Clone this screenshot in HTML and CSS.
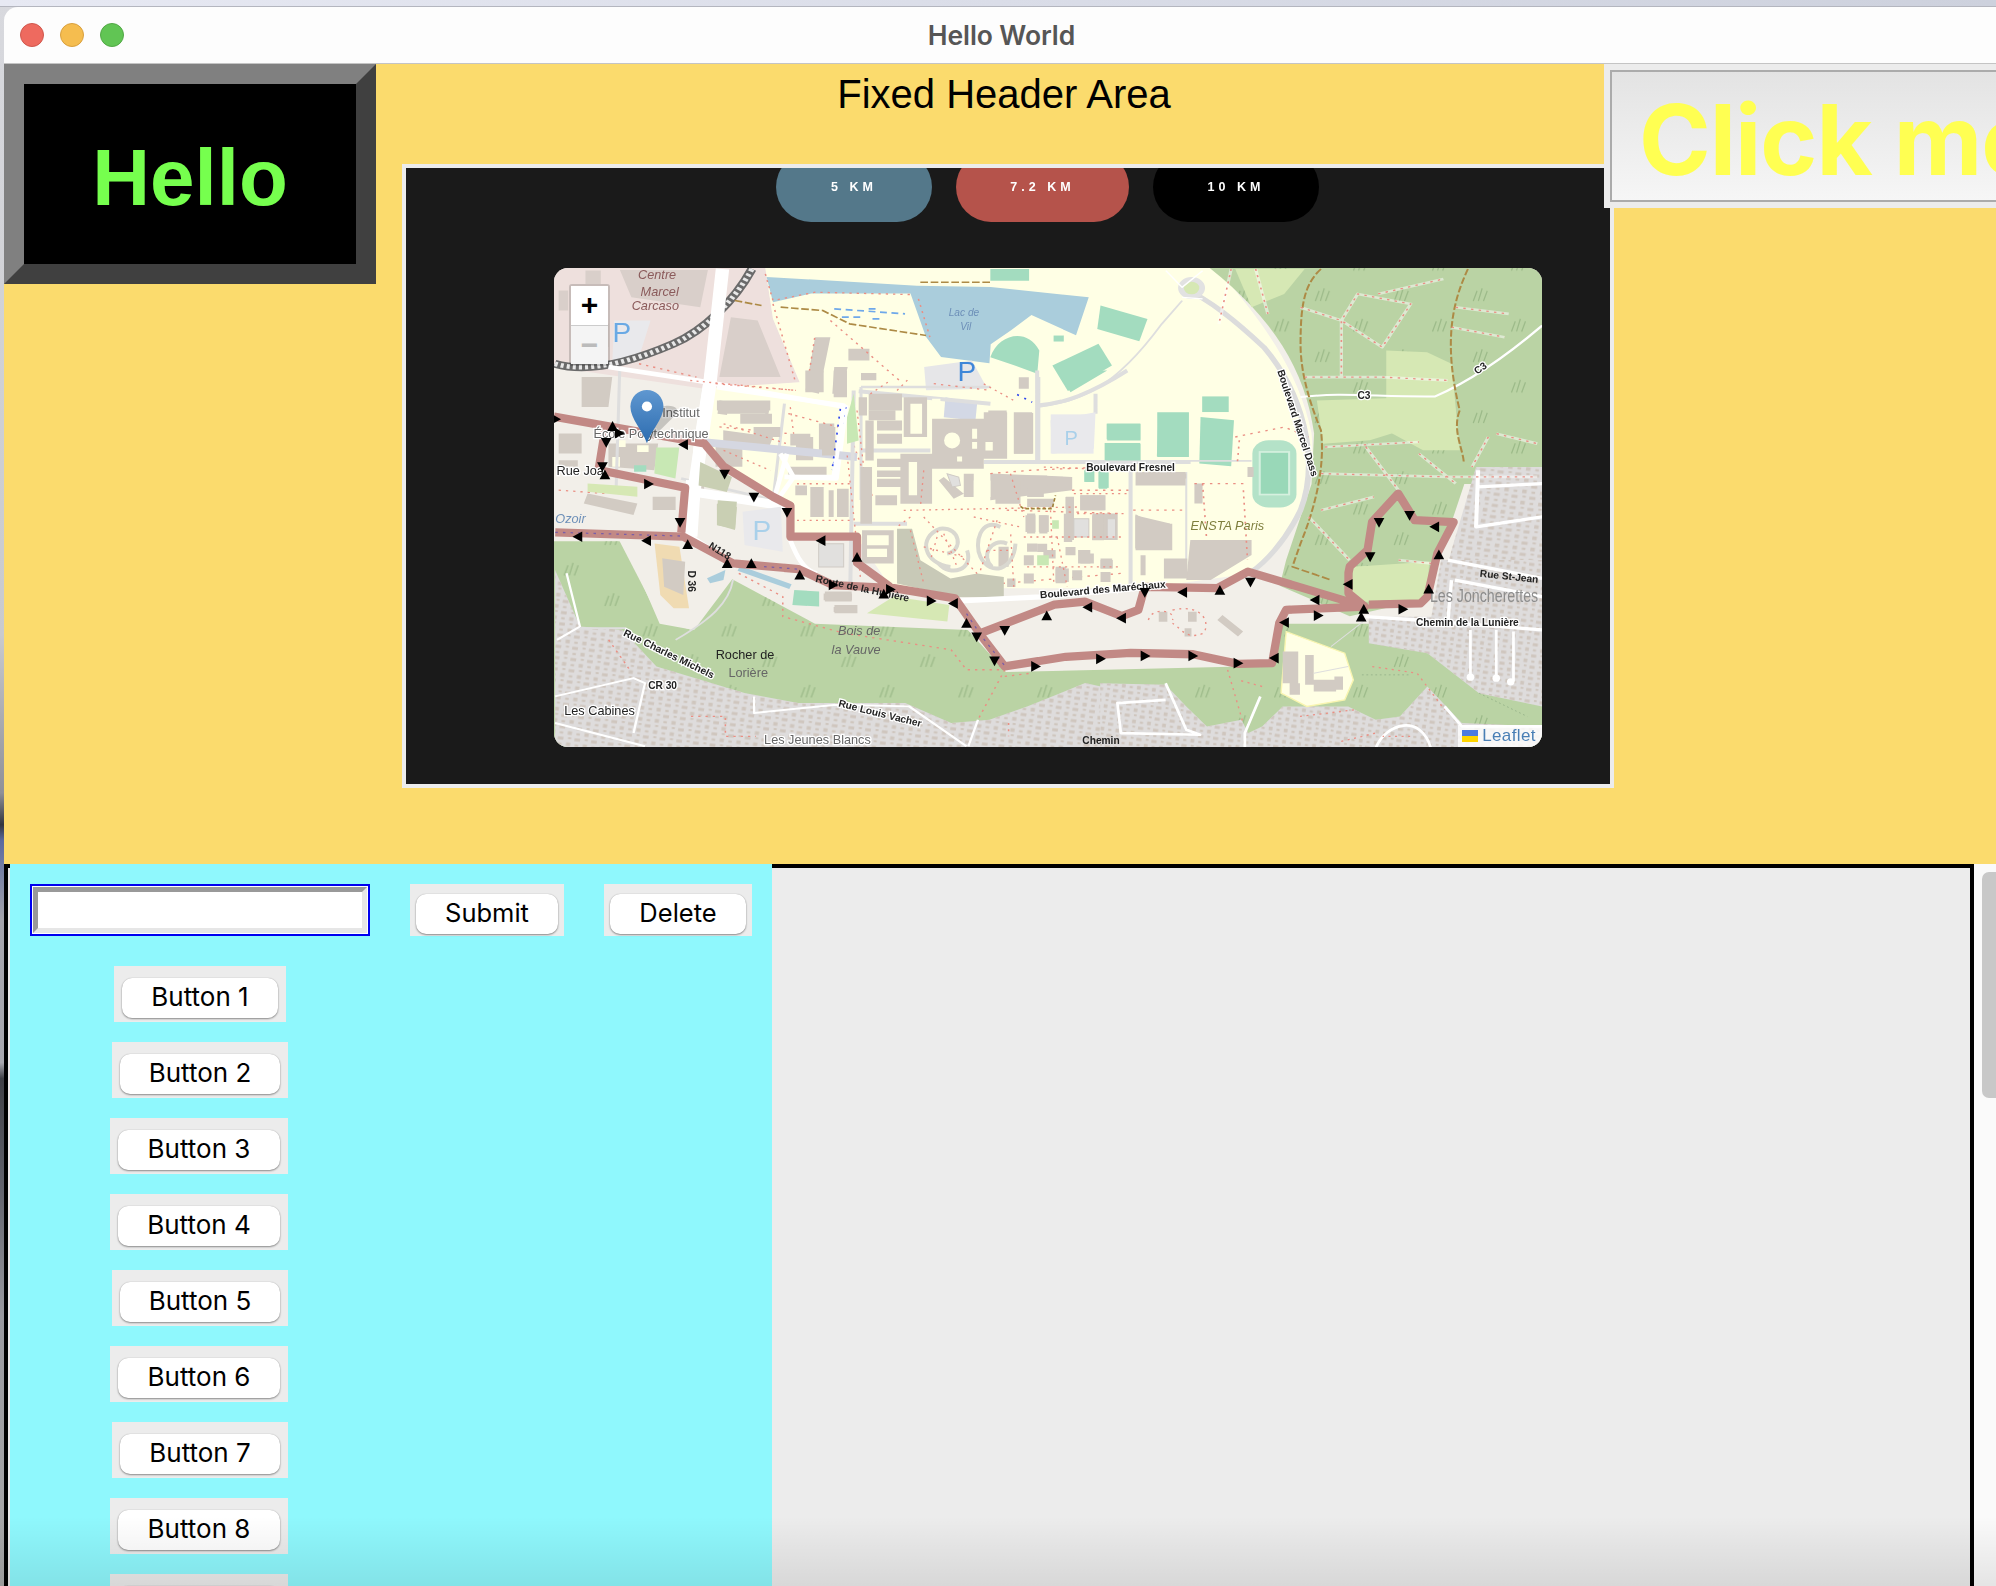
FILE: index.html
```html
<!DOCTYPE html>
<html lang="en">
<head>
<meta charset="utf-8">
<title>Hello World</title>
<link rel="stylesheet" href="styles.css">
</head>
<body>
<div class="desk-strip"></div>
<div class="window">
  <div class="titlebar">
    <div class="lights"><span class="light red"></span><span class="light amber"></span><span class="light green"></span></div>
    <div class="title">Hello World</div>
  </div>
  <header class="top">
    <div class="hello"><span>Hello</span></div>
    <div class="main">
      <h1 class="heading">Fixed Header Area</h1>
      <div class="frame">
        <div class="pills">
          <span class="pill pill-blue">5 KM</span>
          <span class="pill pill-red">7.2 KM</span>
          <span class="pill pill-black">10 KM</span>
        </div>
        <div class="map">
          <svg class="map-svg" viewBox="435 210 776 377" preserveAspectRatio="none" xmlns="http://www.w3.org/2000/svg">
            <defs>
              <pattern id="trees" width="62" height="48" patternUnits="userSpaceOnUse">
                <path class="tree" d="M12 12l-3 8M16 10l-3 10M20 12l-3 8M44 36l-3 8M48 34l-3 10M52 36l-3 8"/>
              </pattern>
              <pattern id="houses" width="44" height="34" patternUnits="userSpaceOnUse" patternTransform="rotate(8)">
                <rect class="house" x="3" y="4" width="15" height="9"/><rect class="house" x="27" y="19" width="11" height="11"/><rect class="house" x="30" y="3" width="8" height="6"/><rect class="house" x="6" y="22" width="9" height="7"/>
              </pattern>
              <linearGradient id="pin" x1="0" y1="0" x2="0" y2="1"><stop offset="0" stop-color="#5f97d0"/><stop offset="1" stop-color="#2c6cb0"/></linearGradient>
              <path id="au" d="M0-4.5 4.2 3.2H-4.2Z"/>
              <path id="ad" d="M0 4.5 4.2-3.2H-4.2Z"/>
              <path id="al" d="M-4.5 0 3.2-4.2V4.2Z"/>
              <path id="ar" d="M4.5 0-3.2-4.2V4.2Z"/>
            </defs>

            <!-- land use -->
            <rect class="land" x="435" y="210" width="776" height="377"/>
            <path class="pinkzone" d="M435 210H601L607 250 628 300 560 306 435 288Z"/>
            <path class="campus" d="M601 210H955C990 250 1020 290 1030 340 1035 390 1010 430 985 450L898 462 700 462 675 425 620 420 618 395 570 370 548 345 562 304 628 300 607 250Z"/>
            <path class="lake" d="M602 217 720 224 778 225 855 233 845 263 810 247 794 259 778 270 777 285 739 280 727 264 715 230 637 230 607 237Z"/>
            <path class="forest" d="M950 210H1211V380H1150L1130 440 1122 470 1060 484 1005 460 1010 440 1030 380 1032 340C1025 290 1000 250 950 210Z"/>
            <path class="trees" d="M950 210H1211V380H1150L1130 440 1122 470 1060 484 1005 460 1010 440 1030 380 1032 340C1025 290 1000 250 950 210Z"/>
            <path class="forest" d="M435 425H490L518 490 545 495 575 455 640 490 760 495 790 528 1000 523 1007 490 1060 490 1211 490V587H435Z"/>
            <path class="trees" d="M435 425H490L518 490 545 495 575 455 640 490 760 495 790 528 1000 523 1007 490 1060 490 1211 490V587H435Z"/>

            <!-- east forest, campus edge -->
            <g transform="translate(777.7 196.4) scale(.3206 .2618)">
              <path class="meadow" d="M800 450 1060 440 1060 520 930 570 815 580Z"/>
              <path class="meadow" d="M970 300 1070 305 1130 340 1150 600 1060 600 970 540Z"/>
              <path class="meadow" d="M600 55H770L720 130 640 170Z"/>
              <path class="meadow" d="M890 950 1075 935 1070 1050 880 1050Z"/>
              <path class="residential" d="M1190 650H1352V1050H1100L1130 900Z"/>
              <path class="houses" d="M1190 650H1352V1050H1100L1130 900Z"/>
              <path class="whiteroad w10" d="M1195 660 1190 830 1352 800M1195 710 1352 700M1110 940 1352 1000"/>
              <path class="sport" d="M270 165 385 205 365 272 262 235Z"/>
              <path class="sport" d="M152 345 265 280 298 345 190 422Z"/>
              <path class="sport" d="M0 320C20 250 90 230 120 300L115 370 60 345Z"/>
              <path class="sport" d="M0 55H95V90H0Z"/>
              <path class="sport" d="M155 255h25v18h-25Z"/>
              <rect class="sport" x="519" y="438" width="65" height="47"/>
              <path class="sport" d="M412 488 485 488 478 618 408 618Z"/>
              <path class="sport" d="M515 500 597 510 590 648 512 640Z"/>
              <rect class="sport" x="285" y="520" width="82" height="47"/>
              <rect class="sport" x="280" y="578" width="87" height="52"/>
              <rect class="sport" x="230" y="660" width="25" height="35"/>
              <rect class="sport" x="265" y="665" width="25" height="48"/>
              <rect class="sportlight" x="642" y="570" width="108" height="202" rx="40"/>
              <rect class="sport dark" x="660" y="605" width="72" height="128"/>
              <path class="grayroad w5" d="M0 632 H640M120 380V630M345 665V1000M480 665V950M120 470C220 450 300 420 420 220L470 150"/>
              <path class="edge" d="M470 110C540 150 600 210 670 290 760 420 810 620 760 780 720 880 670 940 640 965"/>
              <circle class="meadowc" cx="493" cy="112" r="26"/>
              <path class="whiteroad w6" d="M760 440C860 425 950 440 1090 438 1180 390 1280 300 1352 225"/>
              <path class="whiteroad w4" d="M430 60 470 110 520 60M520 145 470 140"/>
              <rect class="parking" x="148" y="492" width="105" height="118"/>
              <text class="p-big pale" x="182" y="580">P</text>
              <path class="bld" d="M355 795 440 820V895H355ZM490 870H640V915L540 990H480ZM-5 480H40V620H-5ZM58 488H105V610H58ZM220 735H280V780H220ZM185 740H205V870H185ZM250 790H312V870H250ZM90 790H110V850H90ZM120 795H140V850H120ZM0 670 200 680V720L0 750ZM90 880h25v25H90ZM130 900h30v25h-30ZM270 930h30v25h-30ZM215 900h30v40h-30ZM20 890h25v60H20ZM160 950h25v50h-25ZM370 670h110v15H370ZM500 700h20v60h-20ZM630 650h15v30h-15Z"/>
              <path class="foot-base" d="M590 55 560 220M650 55 680 190M760 170 860 210 960 290 1030 160 900 130 860 210 860 380M950 130 1110 85M770 380H960L1120 390M1130 230 1260 260M1140 170 1270 190M820 590 1050 575M810 670 1120 680 1340 680M920 590 1000 720M1050 610 1140 700M1220 560 1180 650M1240 550 1340 580M810 780 940 740M780 800 880 930M1000 930 1080 940"/>
              <path class="brown" d="M810 55C770 100 760 160 760 280 760 340 770 420 810 540 820 640 800 760 760 880L740 950 835 990M1170 55C1130 160 1110 280 1150 480 1130 540 1160 600 1160 640 1140 760 1130 780M1145 130H1280L1345 55M1275 135C1240 300 1260 400 1230 520M1060 450V590L985 640 1000 720M790 800 900 880 880 980M1340 260C1320 420 1320 500 1305 580M0 100 130 105 270 145 420 225"/>
              <path class="foot" d="M590 55 560 220M650 55 680 190M760 170 860 210 960 290 1030 160 900 130 860 210 860 380M950 130 1110 85M770 380H960L1120 390M1130 230 1260 260M1140 170 1270 190M820 590 1050 575M810 670 1120 680 1340 680M920 590 1000 720M1050 610 1140 700M1220 560 1180 650M1240 550 1340 580M810 780 940 740M780 800 880 930M1000 930 1080 940"/>
              <path class="foot" d="M600 560 720 530 780 560M610 570 605 640M0 670 100 660 280 650M200 720H340M350 780H480M500 700H620M620 720 630 930M520 700 530 870M40 780 320 790M30 1000 320 970"/>
            </g>

            <!-- west campus / top-left -->
            <g transform="translate(306.4 117.8) scale(.3006 .2618)">
              <path class="bld pinkbld" d="M600 358H830L810 470 630 440ZM890 500 960 510 1020 680 860 680ZM440 420h25v60h-25ZM510 360h40v40h-40ZM510 520h60v70h-60Z"/>
              <path class="parking" d="M585 510H680L650 620 580 640Z"/>
              <path class="sand" d="M1395 650 1520 630 1560 715 1400 720Z"/>
              <path class="bld" d="M1110 560H1150L1120 730 1085 720ZM1197 595h55v35h-55ZM1160 650h35l-15 80h-25ZM1230 668h40v22h-40ZM500 680h80l-10 90h-70ZM860 750 990 780 985 810 855 790ZM570 880H700L690 960 570 950ZM870 840 1000 860 990 890 870 880ZM1450 890h60v60h-60ZM440 850h60v60h-60ZM850 890h70v60h-70ZM1060 860h45v70h-45ZM1120 820h40v100h-40ZM1040 950h100v25h-100ZM800 980h20v60h-20ZM440 930h50v20h-50ZM1270 740h60v25h-60ZM1250 780h70v30h-70Z"/>
              <path class="campus" d="M590 870h25v20h-25ZM645 885h30v20h-30ZM580 920h20v30h-20ZM880 790h100v20H880Z"/>
              <path class="green" d="M695 892 755 892 745 985 690 970Z"/>
              <path class="sport" d="M637 945h32v20h-32Z"/>
              <path class="grayroad w8" d="M840 700 1190 770M600 640 590 1020M1230 710H1568M1230 710V1050M1030 760 1000 1050 760 985"/>
              <path class="rail" d="M430 640C520 670 640 630 740 580 820 540 900 450 945 355"/>
              <path class="raildash" d="M430 640C520 670 640 630 740 580 820 540 900 450 945 355"/>
              <path class="whiteroad w35" d="M868 355 835 700 790 1050"/>
              <path class="whiteroad w14" d="M570 650 800 690 1190 770 1165 985 1030 980M810 1030 1000 1060"/>
              <path class="blue-dash" d="M1160 475 1345 490M1180 500 1230 500M1250 475h30M1260 505h25"/>
              <path class="blue-dot" d="M1190 770 1155 960"/>
              <path class="brown" d="M900 450 970 465M1020 470 1130 480 1200 520 1400 555M1385 395H1568"/>
              <path class="foot" d="M980 370 1000 450 1110 425 1360 432M1000 460 1060 700M1150 510 1330 690M1090 700 1110 555M650 640 800 680M1380 445 1410 560M1200 850 1260 1040M850 700 1060 720M1420 700 1568 720M860 830 1040 850M1040 790 1170 830M440 1020 560 1030"/>
            </g>

            <!-- central campus -->
            <g transform="translate(542 290.7) scale(.262)">
              <path class="grayfield" d="M620 475H665L690 570 780 625 860 610 940 620V680H800L620 640Z"/>
              <path class="slate" d="M765 80 860 100 855 150 760 140Z"/>
              <path class="purple-road" d="M40 215 500 260"/>
              <path class="grayroad w12" d="M880 275H1500M1040 0V275M510 240H720M490 60 480 640M490 460H650M505 62 900 100M1040 105C1120 100 1200 70 1310 0M1320 300V650M1215 70V130"/>
              <path class="whiteroad w14" d="M80 50 460 105 430 320 310 320M270 250 310 320 260 390M0 370 290 415M300 510C320 560 340 600 380 610M290 250 250 390"/>
              <path class="whiteroad w30" d="M60 0 25 220 0 600"/>
              <path class="whiteroad w16" d="M810 692 1050 680 1380 650"/>
              <path class="parking" d="M1080 150 1215 125 1210 235 1085 250Z"/>
              <text class="p-big pale" x="1122" y="225">P</text>
              <path class="sport" d="M1250 160h100v50h-100ZM1245 220h105v50h-105ZM1400 125h95v135h-95ZM1185 295h25v40h-25ZM1225 300h25v55h-25ZM1100 0h150l-110 65Z"/>
              <path class="bld" d="M725 145H880V295H725ZM630 250H725V400H630ZM640 80H710V200H640ZM880 125H950V265H880ZM970 125H1025V250H970ZM560 150h75v30h-75ZM560 190h75v30h-75ZM525 150h25v120h-25ZM510 290h35v170h-35ZM560 265h70v25h-70ZM560 300h70v20h-70ZM560 325h70v25h-70ZM555 375h65v30h-65ZM505 80h25v55h-25ZM535 70h100v50H535ZM820 310h30v70h-30ZM910 330h80v35h-80ZM915 375h75v25h-75ZM1000 315h70v30h-70ZM1010 350h50v30h-50ZM1070 320h75v35h-75ZM1010 385h80v25h-80ZM1125 380h25v35h-25ZM1170 375h75v45h-75ZM1120 430h25v85h-25ZM1205 435h35v75h-35ZM1005 435h30v50h-30ZM1045 435h30v50h-30ZM1335 432 1390 460H1445V540H1335ZM1335 305H1485V345H1335ZM345 0h55v65h-55ZM430 0h40v80h-40ZM80 90h160v30H80ZM150 130h95v30h-95ZM190 170h80v30h-80ZM300 190h60v35h-60ZM395 170h40v85h-40ZM315 345h35v30h-35ZM360 350h40v90h-40ZM415 360h15v80h-15ZM440 355h35v85h-35ZM515 480h95v100h-95ZM1000 555h30v30h-30ZM1040 520h30v25h-30ZM1095 595h40v40h-40ZM1145 600h30v30h-30ZM1230 565h35v30h-35ZM1000 610h30v30h-30ZM1230 605h30v30h-30ZM950 625h25v25h-25ZM1170 550h40v30h-40ZM1420 565h70v60h-70ZM1350 555h15v60h-15ZM1125 530h30v25h-30ZM515 10h40v15h-40ZM985 20h30v35h-30ZM760 320 820 370 790 385 745 330ZM430 710h70v15h-70ZM400 670h85v20h-85ZM80 400h55v20H80Z"/>
              <path class="campus" d="M660 100h35v90h-35ZM655 275h25v100h-25ZM885 215h22v25h-22ZM845 175h15v30h-15ZM845 215h15v20h-15ZM800 258h15v15h-15ZM530 495h65v30h-65ZM530 535h60v25h-60ZM850 330h50v50h-50ZM725 85h25v20h-25Z"/>
              <circle class="campusc" cx="785" cy="210" r="24"/>
              <path class="light-bld" d="M385 520h75v70h-75ZM1150 445h45v55h-45ZM1250 445h25v60h-25ZM770 310l35 10 5 25-25 5Z"/>
              <path class="olive" d="M30 275 125 320 110 365 25 345ZM80 400l60 10-5 65-55-10Z"/>
              <path class="spiral" d="M780 590C700 580 680 500 750 475 810 470 820 540 770 550M830 540C850 600 780 620 745 580M930 470C870 440 850 520 870 560 900 620 970 600 975 520M905 590C870 560 900 500 950 520"/>
              <path class="foot" d="M700 440 860 610M920 450 870 600M700 530 820 560M760 490 800 590M890 540 960 540M500 120 520 290M640 420 1160 410M1150 370H1310M1160 430H1310M960 310 1000 440M1080 420 1090 640M660 440 620 470M510 620 470 250M1000 500H1300M970 650 960 480M300 110 310 190M0 30 320 60M320 340H480M320 450H480M540 70 600 30M880 40 970 90M1060 290 1330 300M100 160 290 220M660 480 700 640M740 500 720 570M850 440 990 470M1010 590H1290M1100 500 1130 650M700 300 690 410M100 240 240 300M620 60 660 20"/>
              <path class="blue-dot" d="M450 115 425 300M980 72 1025 95"/>
              <path class="green" d="M470 220 505 210 490 70 470 140ZM1040 555h35v30h-35ZM1085 450h20v25h-20Z"/>
              <path class="sand-brown" d="M990 408 1000 415H1085L1095 375"/>
            </g>

            <!-- south-west -->
            <g transform="translate(416.3 377) scale(.3006 .2618)">
              <path class="residential" d="M65 270 130 440 240 450 330 560 560 640 700 670 980 670 1100 730 1200 720 1300 680 1450 610 1568 640V802H65Z"/>
              <path class="houses" d="M65 270 130 440 240 450 330 560 560 640 700 670 980 670 1100 730 1200 720 1300 680 1450 610 1568 640V802H65Z"/>
              <path class="land" d="M230 175 340 420 420 450 530 290 540 170 410 170Z"/>
              <path class="school" d="M325 190 390 200 415 385 375 385 340 345Z"/>
              <path class="bld" d="M345 235 405 245 400 345 350 320ZM150 40 280 70 270 105 140 70ZM320 50h60v40h-60ZM770 335h70v30h-70ZM795 375h60v25h-60Z"/>
              <path class="pale-green" d="M150 10 280 20 280 50 150 35ZM880 400 950 350 1095 375 1090 425Z"/>
              <path class="lake-fill" d="M462 295 510 270 505 300 470 310Z"/>
              <path class="stream" d="M545 265 680 320"/>
              <path class="sport" d="M690 330 755 335 755 380 685 375Z"/>
              <path class="parking" d="M555 95 655 80 660 215 560 195Z"/>
              <path class="olive" d="M490 60 540 65 535 150 490 135Z"/>
              <path class="whiteroad w16" d="M415 0 405 160 540 260M430 30 650 70"/>
              <path class="whiteroad w6" d="M95 280 130 440 70 480M65 650 270 595 300 610 270 760M65 730 300 800M585 650V700L800 675 990 680 1140 800M1170 720 1145 800M1568 680 1520 660"/>
              <path class="grayroad w5" d="M530 300C520 370 470 420 380 480M130 445H250"/>
              <path class="foot" d="M545 280 660 350 660 410 820 460 1100 510 1140 570 1240 570M1240 570 1170 720M1240 590 1310 580M205 480 260 570M420 710H510V770H590M1250 730V770"/>
            </g>

            <!-- south-east -->
            <g transform="translate(864 439.9) scale(.2705 .2618)">
              <path class="land" d="M-40 150 100 130 440 50 510 90 500 290 130 265 -40 270Z"/>
              <path class="residential" d="M0 370 190 375 250 440 310 500 410 480 430 520 470 500 530 440 720 440 800 480 870 470 950 380 1050 490 1283 500V565H0Z"/>
              <path class="houses" d="M0 370 190 375 250 440 310 500 410 480 430 520 470 500 530 440 720 440 800 480 870 470 950 380 1050 490 1283 500V565H0Z"/>
              <path class="residential" d="M780 170H1283V440L1100 400 950 280 780 250Z"/>
              <path class="houses" d="M780 170H1283V440L1100 400 950 280 780 250Z"/>
              <path class="residential" d="M990 0H1283V180H960Z"/>
              <path class="houses" d="M990 0H1283V180H960Z"/>
              <path class="campus edge-y" d="M540 215 710 280 735 360 710 420 600 440 525 400Z"/>
              <path class="bld" d="M530 275h45v95h-45ZM595 285h25v90h-25ZM620 360h65v35h-65ZM550 370h30v35h-30ZM680 350h25v40h-25ZM170 155h25v30h-25ZM255 155h25v30h-25ZM245 205h20v25h-20ZM355 165l60 50-15 15-60-50Z"/>
              <path class="meadow" d="M735 125 740 20 950 15 940 105 790 125Z"/>
              <path class="whiteroad w10" d="M770 170 920 180 1283 210M1010 0 1283 55M1020 60 1010 180M1283 110 1030 60"/>
              <path class="whiteroad w8" d="M1075 210V350M1150 210V360M1200 215V365M190 370 250 510 290 525 60 520 50 430 190 420M465 410 420 520V565M800 565C830 490 930 460 960 565M1000 440 1050 500 1283 500"/>
              <circle class="white-dot" cx="1075" cy="352" r="11"/><circle class="white-dot" cx="1150" cy="355" r="11"/><circle class="white-dot" cx="1192" cy="366" r="11"/>
              <path class="foot" d="M370 330 415 490M140 180C150 140 220 150 210 180M210 150C300 130 320 190 300 220 250 240 240 210 210 190M580 470 740 450M470 380 400 360M790 320 920 340 1000 450M900 530h-80M700 545 800 520"/>
              <path class="tree-line" d="M760 345H900M1100 400 1240 470"/>
              <path class="grayroad w3" d="M670 260 770 180M620 340 720 320"/>
            </g>

            <!-- route -->
            <path class="route" d="M435 327 553 348 568 366 607 390 620.7 397 620.7 421.5 673 421.5 673 442 699 461M475 338 470 369 538 383 535 418M436 418 536.5 421.5 575.6 442.4 627 447 654 459.5 702 462 750 470 771 500 789 523.6 837 516 888 513 937 514 972 521.6 999 521 1004.6 489.6 1010 479 1072 476.5M771 497 828 475 852 472.6 881 484 894 479 899 461 956 462 980 449 1072 476.5 1059 466 1059 450 1060 445 1074 432 1077.5 410 1098 387.5 1111 408.5 1141.6 410 1128.8 434.6 1121 468.6 1115.6 474 1075 475"/>
            <path class="route-purple" d="M436 418 536 421M600 445 627 447M759 482 771 500 789 523"/>

            <!-- labels -->
            <g class="lbl">
              <text class="lbl-red" x="501" y="219">Centre</text>
              <text class="lbl-red" x="503" y="232">Marcel</text>
              <text class="lbl-red" x="496" y="243">Carcaso</text>
              <text class="lbl-p" x="481" y="268">P</text>
              <text class="lbl-p strong" x="752" y="299">P</text>
              <text class="lbl-p pale" x="591" y="424">P</text>
              <text class="lbl-blue small-r" x="745" y="248">Lac de</text>
              <text class="lbl-blue small-r" x="754" y="259">Vil</text>
              <text class="lbl-blue" x="436" y="411">Ozoir</text>
              <text class="lbl-gray halo" x="520" y="327">Institut</text>
              <text class="lbl-gray halo" x="466" y="344">École Polytechnique</text>
              <text class="lbl-dark halo" x="437" y="373">Rue Joa</text>
              <text class="lbl-dark halo small" x="853" y="370">Boulevard Fresnel</text>
              <text class="lbl-olive" x="935" y="416">ENSTA Paris</text>
              <text class="lbl-dark halo small" x="817" y="470" transform="rotate(-5 817 470)">Boulevard des Maréchaux</text>
              <text class="lbl-dark halo small" x="1003" y="291" transform="rotate(72 1003 291)">Boulevard Marcel Dass</text>
              <text class="lbl-dark halo small" x="1066" y="313">C3</text>
              <text class="lbl-dark halo small" x="1160" y="294" transform="rotate(-35 1160 294)">C3</text>
              <text class="lbl-gray big" x="1123" y="473" textLength="85" lengthAdjust="spacingAndGlyphs">Les Joncherettes</text>
              <text class="lbl-dark halo small" x="1112" y="492">Chemin de la Lunière</text>
              <text class="lbl-dark small" x="1162" y="453" transform="rotate(6 1162 453)">Rue St-Jean</text>
              <text class="lbl-gray ital" x="658" y="499">Bois de</text>
              <text class="lbl-gray ital" x="653" y="514">la Vauve</text>
              <text class="lbl-dark mid" x="562" y="518">Rocher de</text>
              <text class="lbl-gray mid" x="572" y="532">Lorière</text>
              <text class="lbl-dark mid halo" x="443" y="562">Les Cabines</text>
              <text class="lbl-dark halo small" x="489" y="499" transform="rotate(26 489 499)">Rue Charles Michels</text>
              <text class="lbl-dark halo small" x="658" y="555" transform="rotate(14 658 555)">Rue Louis Vacher</text>
              <text class="lbl-dark halo small" x="509" y="541">CR 30</text>
              <text class="lbl-gray halo" x="600" y="585">Les Jeunes Blancs</text>
              <text class="lbl-dark small" x="556" y="430" transform="rotate(32 556 430)">N118</text>
              <text class="lbl-dark small" x="640" y="457" transform="rotate(12 640 457)">Route de la Hunière</text>
              <text class="lbl-dark small" x="540" y="448" transform="rotate(90 540 448)">D 36</text>
              <text class="lbl-dark small" x="850" y="585">Chemin</text>
            </g>

            <!-- arrows -->
            <g class="arrows">
              <use href="#au" x="481" y="335"/><use href="#ar" x="486" y="340"/><use href="#ad" x="476" y="347"/><use href="#ad" x="473" y="366"/><use href="#au" x="475" y="373"/><use href="#ar" x="509" y="380"/><use href="#al" x="537" y="349"/><use href="#ad" x="569" y="372"/><use href="#ad" x="592" y="390"/><use href="#ad" x="618" y="402"/><use href="#al" x="645" y="424.6"/><use href="#au" x="673" y="438"/>
              <use href="#al" x="454" y="421.5"/><use href="#al" x="508" y="424.6"/><use href="#ad" x="534" y="410"/><use href="#au" x="540" y="428"/><use href="#au" x="571" y="443"/><use href="#au" x="590" y="443"/><use href="#au" x="628" y="452"/><use href="#ar" x="654" y="459.5"/><use href="#au" x="694" y="467"/><use href="#ar" x="699" y="463"/><use href="#ar" x="731" y="472"/><use href="#al" x="749" y="474"/><use href="#au" x="759" y="490"/><use href="#ad" x="767" y="500"/><use href="#ad" x="781" y="519"/><use href="#ar" x="813" y="523.6"/><use href="#ar" x="864" y="517.6"/><use href="#ad" x="789" y="495"/><use href="#au" x="822" y="484"/><use href="#al" x="854.5" y="477"/><use href="#al" x="881" y="485.6"/>
              <use href="#ad" x="899" y="465"/><use href="#al" x="929" y="465.3"/><use href="#au" x="958" y="464"/><use href="#ad" x="982" y="457"/><use href="#al" x="1033" y="471.3"/><use href="#ar" x="1035" y="483.6"/><use href="#al" x="1009" y="489"/><use href="#al" x="1001" y="517"/><use href="#ar" x="972" y="521"/><use href="#ar" x="936.5" y="515.3"/><use href="#ar" x="899" y="515.3"/><use href="#au" x="1071" y="479"/><use href="#au" x="1069" y="485"/><use href="#ar" x="1101.5" y="478.6"/><use href="#au" x="1122" y="463"/><use href="#al" x="1059" y="459"/><use href="#ad" x="1083" y="410"/><use href="#ad" x="1107" y="404.5"/><use href="#al" x="1127" y="413.7"/><use href="#au" x="1130" y="436"/><use href="#ad" x="1076" y="437"/><use href="#ar" x="436" y="329"/>
            </g>

            <!-- marker -->
            <path class="pin-shadow" d="M510 346 530 326C536 320 526 316 518 320Z"/>
            <path fill="url(#pin)" class="pin" d="M508 348C505 338 495 329 495 319A13 13 0 1 1 521 319C521 329 511 338 508 348Z"/>
            <circle class="pin-dot" cx="508" cy="319" r="4"/>
          </svg>
          <div class="zoom-ctl">
            <span class="zoom-btn">+</span>
            <span class="zoom-btn off">−</span>
          </div>
          <div class="attribution"><svg class="flag" viewBox="0 0 16 12"><rect class="flag-b" width="16" height="6"/><rect class="flag-y" y="6" width="16" height="6"/></svg><span>Leaflet</span></div>
        </div>
      </div>
    </div>
    <div class="click-wrap"><button class="click" type="button">Click me</button></div>
  </header>
  <section class="pane">
    <div class="scroller">
      <div class="left">
        <div class="form-row">
          <div class="field"><input class="entry" type="text"></div>
          <div class="wrap wrap-s w-submit"><button class="btn" type="button">Submit</button></div>
          <div class="wrap wrap-s w-delete"><button class="btn" type="button">Delete</button></div>
        </div>
        <div class="list">
          <div class="wrap w172"><button class="btn" type="button">Button 1</button></div>
          <div class="wrap w176"><button class="btn" type="button">Button 2</button></div>
          <div class="wrap w178"><button class="btn" type="button">Button 3</button></div>
          <div class="wrap w178"><button class="btn" type="button">Button 4</button></div>
          <div class="wrap w176"><button class="btn" type="button">Button 5</button></div>
          <div class="wrap w178"><button class="btn" type="button">Button 6</button></div>
          <div class="wrap w176"><button class="btn" type="button">Button 7</button></div>
          <div class="wrap w178"><button class="btn" type="button">Button 8</button></div>
          <div class="wrap w178"><button class="btn" type="button">Button 9</button></div>
        </div>
      </div>
      <div class="right"></div>
    </div>
    <div class="scrollbar"><div class="thumb"></div></div>
  </section>
</div>
<div class="bottom-fade"></div>
</body>
</html>
```
FILE: styles.css
```css
* { box-sizing: border-box; }
html, body { margin: 0; height: 1586px; overflow: hidden; }
body {
  position: relative;
  width: 1996px;
  background: linear-gradient(180deg, #d8d9de 0, #c9cace 40%, #8f9098 50%, #33363f 52%, #5b6a9f 53%, #a4a4ac 58%, #a9a9b0 67%, #3f4046 68%, #62646e 75%, #9a9aa0 83%, #aaaaaa 100%);
  font-family: "Inter", "Liberation Sans", sans-serif;
}
.desk-strip { height: 7px; background: linear-gradient(90deg, #e7e9f3, #cdd1dd); border-bottom: 1px solid #b4b6bf; }
.window { margin-left: 4px; width: 2000px; border-radius: 14px 0 0 0; overflow: hidden; }

.titlebar { height: 57px; padding-right: 5px; background: #fdfdfd; display: grid; grid-template-columns: 1fr auto 1fr; align-items: center; border-bottom: 1px solid #c4c4c4; }
.lights { display: flex; gap: 16px; padding-left: 16px; }
.light { width: 24px; height: 24px; border-radius: 50%; border: 1px solid; }
.red { background: #ee6a5f; border-color: #d0574d; }
.amber { background: #f5bd4f; border-color: #d9a03e; }
.green { background: #61c554; border-color: #52a846; }
.title { font-weight: 600; font-size: 26.5px; color: #565656; letter-spacing: -.1px; }

.top { position: relative; height: 800px; background: #fbdb6d; display: flex; align-items: flex-start; }
.hello { width: 372px; height: 220px; border: 20px solid; border-color: #808080 #404040 #404040 #808080; background: #000; display: flex; align-items: center; justify-content: center; flex: none; }
.hello span { font: bold 80px "Liberation Sans", Arial, sans-serif; color: #76ff4e; position: relative; top: 4px; }

.main { margin-left: 26px; width: 1212px; flex: none; }
.heading { margin: 0 0 40px; padding-right: 8px; height: 60px; font: 400 40px/60px "Liberation Sans", Arial, sans-serif; text-align: center; color: #000; }
.frame { height: 624px; border: 4px solid #ececec; background: #1a1a1a; overflow: hidden; }
.pills { display: flex; gap: 24px; margin: -16px 0 0 370px; height: 70px; }
.pill { height: 70px; border-radius: 35px; color: #fff; font: bold 12.5px "Liberation Sans", Arial, sans-serif; letter-spacing: 4px; display: flex; align-items: center; justify-content: center; filter: blur(.6px); }
.pill-blue { width: 156px; background: #54788a; }
.pill-red { width: 173px; background: #b5534b; }
.pill-black { width: 166px; background: #000; }

.map { position: relative; margin: 46px 0 0 148px; width: 988px; height: 479px; border-radius: 14px; overflow: hidden; filter: blur(.7px); }
.map-svg { display: block; width: 100%; height: 100%; font-family: "Liberation Sans", Arial, sans-serif; }
.zoom-ctl { position: absolute; left: 15px; top: 16px; width: 41px; height: 82px; display: flex; flex-direction: column; border: 2px solid rgba(0,0,0,.16); border-radius: 3px; background-clip: padding-box; }
.zoom-btn { height: 39px; background: #fff; color: #000; font: bold 30px/38px "Liberation Sans", Arial, sans-serif; text-align: center; }
.zoom-btn.off { background: #f4f4f4; color: #bbb; border-top: 1px solid #ccc; }
.attribution { position: absolute; right: 0; bottom: 0; height: 22px; padding: 0 6px 0 4px; display: flex; align-items: center; gap: 4px; background: rgba(255,255,255,.8); color: #4a7fb5; font: 17px "Liberation Sans", Arial, sans-serif; letter-spacing: .4px; }
.flag { width: 16px; height: 12px; }
.flag-b { fill: #4c7be1; }
.flag-y { fill: #ffd500; }

/* map layers */
.land { fill: #f2efe9; }
.pinkzone { fill: #eee0dd; }
.campus { fill: #ffffe5; }
.campusc { fill: #ffffe5; }
.edge-y { stroke: #f9f5b0; stroke-width: 4; }
.lake, .lake-fill { fill: #aacddc; }
.forest { fill: #bad3a4; }
.trees { fill: url(#trees); }
.meadow, .pale-green { fill: #d6e8b4; }
.meadowc { fill: #d6e8b4; stroke: #e2e2e2; stroke-width: 14; }
.residential { fill: #dedcdc; }
.houses { fill: url(#houses); }
.tree { fill: none; stroke: #9cba89; stroke-width: 1; }
.house { fill: #cfc6be; }
.sport { fill: #a3dcbf; }
.sportlight { fill: #b4e2c8; }
.sport.dark { fill: #99d8b8; stroke: #d6f0df; stroke-width: 5; }
.bld { fill: #d2cbc3; }
.pinkbld { fill: #d9cfca; }
.parking { fill: #e9e9ec; }
.sand { fill: #e6e6e8; }
.green { fill: #c8e8b4; }
.slate { fill: #d3d8e5; }
.grayfield { fill: #c8c9b7; }
.olive { fill: #c9cfb3; }
.light-bld { fill: #e1e0de; stroke: #cfcac4; stroke-width: 3; }
.school { fill: #f0dbb2; }
.stream { fill: none; stroke: #aacddc; stroke-width: 16; }
.white-dot { fill: #fff; }

.whiteroad, .grayroad, .edge, .rail, .raildash, .foot, .foot-base, .brown, .blue-dash, .blue-dot, .purple-road, .spiral, .sand-brown, .tree-line, .route, .route-purple { fill: none; stroke-linejoin: round; }
.whiteroad { stroke: #fff; }
.w4 { stroke-width: 4; } .w5 { stroke-width: 5; } .w6 { stroke-width: 6; } .w8 { stroke-width: 8; } .w10 { stroke-width: 10; } .w12 { stroke-width: 12; } .w14 { stroke-width: 14; } .w16 { stroke-width: 16; } .w30 { stroke-width: 30; } .w35 { stroke-width: 35; } .w3 { stroke-width: 3; }
.grayroad { stroke: #dedede; }
.edge { stroke: #dcdcdc; stroke-width: 14; }
.rail { stroke: #6a6a6a; stroke-width: 24; }
.raildash { stroke: #e8e8e8; stroke-width: 14; stroke-dasharray: 8 8; }
.foot { stroke: #ea8f84; stroke-width: 4; stroke-dasharray: 6 13; }
.foot-base { stroke: rgba(255,255,255,.5); stroke-width: 8; }
.brown { stroke: #ad8a45; stroke-width: 5; stroke-dasharray: 20 7; }
.sand-brown { stroke: #a0823c; stroke-width: 5; stroke-dasharray: 11 6; }
.blue-dash { stroke: #6ea8ea; stroke-width: 5; stroke-dasharray: 18 12; }
.blue-dot { stroke: #2c44ee; stroke-width: 5; stroke-dasharray: 6 18; }
.purple-road { stroke: #d5d7e1; stroke-width: 24; }
.spiral { stroke: #d9d8d0; stroke-width: 12; }
.tree-line { stroke: #8aa881; stroke-width: 2; stroke-dasharray: 5 8; }
.route { stroke: #c28985; stroke-width: 6.5; }
.route-purple { stroke: #7a5ea8; stroke-width: 1; stroke-dasharray: 2 4; }
.arrows { fill: #000; }
.pin-shadow { fill: rgba(0,0,0,.18); }
.pin-dot { fill: #fff; }

.lbl text { font-size: 10px; }
.lbl .small { font-size: 8px; font-weight: bold; }
.lbl .small-r { font-size: 8px; }
.lbl .mid { font-size: 10px; }
.lbl .big { font-size: 15px; fill: #8d8d8d; }
.lbl .lbl-p { font-size: 22px; fill: #69a9e4; }
.lbl .lbl-p.strong { fill: #3f87d8; }
.lbl .lbl-p.pale { fill: #a9d0ea; }
.p-big { font-size: 60px; fill: #a9d0ea; }
.lbl-red { fill: #8a5a5a; font-style: italic; }
.lbl-blue { fill: #6d8fb8; font-style: italic; }
.lbl-gray { fill: #666; }
.lbl-dark { fill: #222; }
.lbl-olive { fill: #7f7f3e; font-style: italic; }
.ital { font-style: italic; }
.halo { paint-order: stroke; stroke: #fff; stroke-width: 2px; }

.click-wrap { position: absolute; left: 1600px; top: 0; width: 500px; height: 144px; background: #ececec; padding: 6px; z-index: 1; }
.click { display: block; width: 100%; height: 132px; padding: 6px 0 0 27px; text-align: left; border: 2px solid #ababab; background: linear-gradient(180deg, #e3e3e3, #f6f6f6); color: #ffff52; font: 700 97px/1 "Inter", "Liberation Sans", sans-serif; letter-spacing: -1px; }

.pane { height: 722px; display: flex; background: #fafafa; }
.scroller { width: 1970px; height: 722px; display: flex; border: 4px solid #000; border-bottom: 0; background: #ececec; }
.left { margin: -4px 0 0 2px; width: 762px; height: 726px; background: #8ff8fd; flex: none; overflow: hidden; padding: 20px 0 0 20px; }
.right { flex: 1; }
.form-row { display: flex; gap: 40px; height: 52px; }
.field { width: 340px; height: 52px; border: 2px solid #0000f0; background: #fff; padding: 1px; }
.entry { display: block; width: 100%; height: 100%; border: 5px solid; border-color: #999 #e6e6e6 #e6e6e6 #999; background: #fff; outline: 0; padding: 0; }
.wrap { background: #ececec; height: 56px; padding: 12px 8px 4px; }
.wrap-s { height: 52px; padding: 10px 6px 2px; }
.w-submit { width: 154px; }
.w-delete { width: 148px; }
.btn { display: block; width: 100%; height: 40px; padding: 0 0 2px; border: 0; border-radius: 10px; background: #fff; box-shadow: 0 1px 2px rgba(0,0,0,.4), 0 0 1px rgba(0,0,0,.25); color: #000; font: 400 26px/1 "Inter", "Liberation Sans", sans-serif; }
.wrap-s .btn { font-size: 25.5px; }
.list { display: flex; flex-direction: column; gap: 20px; margin-top: 30px; }
.w172 { width: 172px; margin-left: 84px; }
.w176 { width: 176px; margin-left: 82px; }
.w178 { width: 178px; margin-left: 80px; }

.scrollbar { flex: 1; padding: 4px 0 0 8px; background: #fafafa; }
.thumb { width: 14px; height: 226px; margin-top: 4px; background: #c8c8c8; border-radius: 7px 0 0 7px; }

.bottom-fade { position: absolute; left: 0; right: 0; bottom: 0; height: 70px; background: linear-gradient(180deg, rgba(0,0,0,0), rgba(0,0,0,.085)); pointer-events: none; }
```
